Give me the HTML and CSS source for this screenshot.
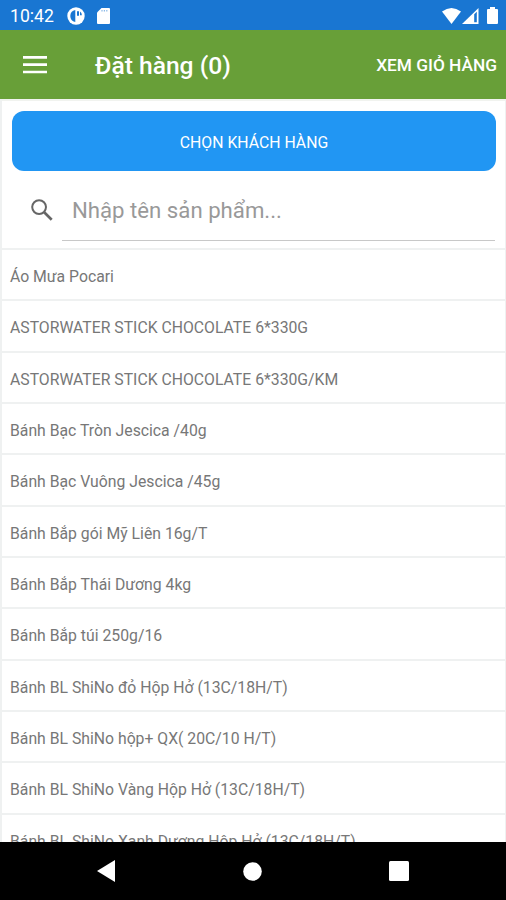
FILE: index.html
```
<!DOCTYPE html>
<html lang="vi">
<head>
    <meta charset="UTF-8">
    <meta name="viewport" content="width=device-width, initial-scale=1.0">
    <title>Đặt hàng</title>
    <link rel="stylesheet" href="styles.css">
</head>
<body>
    <div class="screen">
        <div class="status-bar">
            <span class="time">10:42</span>
            <svg class="icon-app" width="18" height="18" viewBox="0 0 18 18">
                <circle cx="9" cy="9" r="8.7" fill="#fff"/>
                <path d="M8.3 3A6.1 6.1 0 0 0 8.3 15ZM10 4.2h2v4.6h-2Z" fill="#1976d2"/>
                <path d="M13 4.6q1.8 1.4 1.9 3.6h-1.9Z" fill="#1976d2"/>
            </svg>
            <svg class="icon-sd" width="13" height="16" viewBox="0 0 13 16">
                <path d="M4.5 0H12a1 1 0 0 1 1 1v14a1 1 0 0 1-1 1H1a1 1 0 0 1-1-1V4.5Z" fill="#fff"/>
                <path d="M5 2v1.6M7.4 2v1.6M9.8 2v1.6" stroke="#1976d2" stroke-width="1.2" opacity="0.5"/>
            </svg>
            <div class="status-right">
                <svg width="19" height="16" viewBox="0 0 19 16">
                    <path d="M9.5 16L0 3.5Q9.5-3.5 19 3.5Z" fill="#fff"/>
                </svg>
                <svg width="17" height="16" viewBox="0 0 17 16">
                    <path d="M16.5 0v16H0Z" fill="#fff"/>
                    <path d="M12.2 6.2L14.8 3.7v10.6h-2.6Z" fill="#1976d2"/>
                </svg>
                <svg class="icon-battery" width="11" height="17" viewBox="0 0 11 17">
                    <path d="M3 0h5v2h2a1 1 0 0 1 1 1v13a1 1 0 0 1-1 1H1a1 1 0 0 1-1-1V3a1 1 0 0 1 1-1h2Z" fill="#fff"/>
                </svg>
            </div>
        </div>

        <div class="header">
            <svg class="menu" width="24" height="18" viewBox="0 0 24 18">
                <path d="M0 1.4h24M0 8.7h24M0 16h24" stroke="#fff" stroke-width="2.7"/>
            </svg>
            <h1>Đặt hàng (0)</h1>
            <a class="cart-link" href="#">XEM GIỎ HÀNG</a>
        </div>

        <div class="content">
            <div class="top">
                <button class="btn-customer" type="button">CHỌN KHÁCH HÀNG</button>
                <div class="search">
                    <svg class="icon-search" width="22" height="22" viewBox="0 0 22 22">
                        <circle cx="8.1" cy="8.1" r="6.9" fill="none" stroke="#666" stroke-width="2"/>
                        <path d="M13.2 13.2L20.7 20.7" stroke="#666" stroke-width="2.7"/>
                    </svg>
                    <input type="text" placeholder="Nhập tên sản phẩm...">
                </div>
            </div>
            <ul class="products">
                <li>Áo Mưa Pocari</li>
                <li>ASTORWATER STICK CHOCOLATE 6*330G</li>
                <li>ASTORWATER STICK CHOCOLATE 6*330G/KM</li>
                <li>Bánh Bạc Tròn Jescica /40g</li>
                <li>Bánh Bạc Vuông Jescica /45g</li>
                <li>Bánh Bắp gói Mỹ Liên 16g/T</li>
                <li>Bánh Bắp Thái Dương 4kg</li>
                <li>Bánh Bắp túi 250g/16</li>
                <li>Bánh BL ShiNo đỏ Hộp Hở (13C/18H/T)</li>
                <li>Bánh BL ShiNo hộp+ QX( 20C/10 H/T)</li>
                <li>Bánh BL ShiNo Vàng Hộp Hở (13C/18H/T)</li>
                <li>Bánh BL ShiNo Xanh Dương Hộp Hở (13C/18H/T)</li>
            </ul>
        </div>

        <div class="nav-bar">
            <svg width="18" height="22" viewBox="0 0 18 22"><path d="M18 0v22L0 11Z" fill="#fff"/></svg>
            <svg width="19" height="19" viewBox="0 0 19 19"><circle cx="9.5" cy="9.5" r="9.3" fill="#fff"/></svg>
            <svg width="20" height="20" viewBox="0 0 20 20"><rect width="20" height="20" rx="1.5" fill="#fff"/></svg>
        </div>
    </div>
</body>
</html>
```
FILE: styles.css
```
* {
    box-sizing: border-box;
}

body {
    margin: 0;
    font-family: Roboto, "Noto Sans", sans-serif;
    background-color: white;
}

.screen {
    display: flex;
    flex-direction: column;
    width: 100%;
    height: 900px;
    overflow: hidden;
}

.status-bar {
    display: flex;
    align-items: center;
    height: 30px;
    flex-shrink: 0;
    padding: 1px 8px 0 10px;
    background-color: #1976d2;
    color: white;
}

.time {
    width: 57px;
    font-size: 17.6px;
    white-space: nowrap;
}

.icon-sd {
    margin-left: 12px;
}

.status-right {
    display: flex;
    align-items: center;
    margin-left: auto;
    gap: 1px;
}

.icon-battery {
    margin-left: 7px;
}

.header {
    display: flex;
    align-items: center;
    height: 69px;
    flex-shrink: 0;
    padding: 0 9px 0 23px;
    background-color: #689f38;
    color: white;
}

.header h1 {
    margin: 2px 0 0 48px;
    font-size: 24.6px;
    font-weight: 500;
}

.cart-link {
    margin-left: auto;
    color: white;
    font-size: 17.3px;
    font-weight: 500;
    text-decoration: none;
}

.content {
    flex: 1;
    min-height: 0;
    overflow: hidden;
    border-left: 2px solid #eff1f1;
    border-right: 1px solid #eff1f1;
}

.top {
    height: 151px;
    padding: 10px 9px 0 10px;
    border-top: 2px solid #f1f3ef;
    border-bottom: 2px solid #eff1f1;
}

.btn-customer {
    display: block;
    width: 100%;
    height: 60px;
    padding: 2px 0 0;
    border: none;
    border-radius: 12px;
    background-color: #2196f3;
    color: white;
    font-family: inherit;
    font-size: 15.8px;
}

.search {
    display: flex;
    align-items: center;
    height: 70px;
    padding: 0 1px 0 19px;
}

.icon-search {
    margin-top: 7px;
}

.search input {
    flex: 1;
    height: 70px;
    margin-left: 9px;
    padding: 9px 10px 0;
    border: none;
    border-bottom: 1px solid #c8c8c8;
    background: none;
    font-family: inherit;
    font-size: 22.2px;
    outline: none;
}

.search input::placeholder {
    color: #999;
}

.products {
    margin: 0;
    padding: 0;
    list-style: none;
}

.products li {
    height: 51.35px;
    padding-left: 8px;
    border-bottom: 2px solid #eff1f1;
    color: #777;
    font-size: 15.78px;
    line-height: 53px;
    white-space: nowrap;
}

.nav-bar {
    display: flex;
    align-items: center;
    justify-content: space-between;
    height: 58px;
    flex-shrink: 0;
    padding: 0 97px;
    background-color: black;
}
```
